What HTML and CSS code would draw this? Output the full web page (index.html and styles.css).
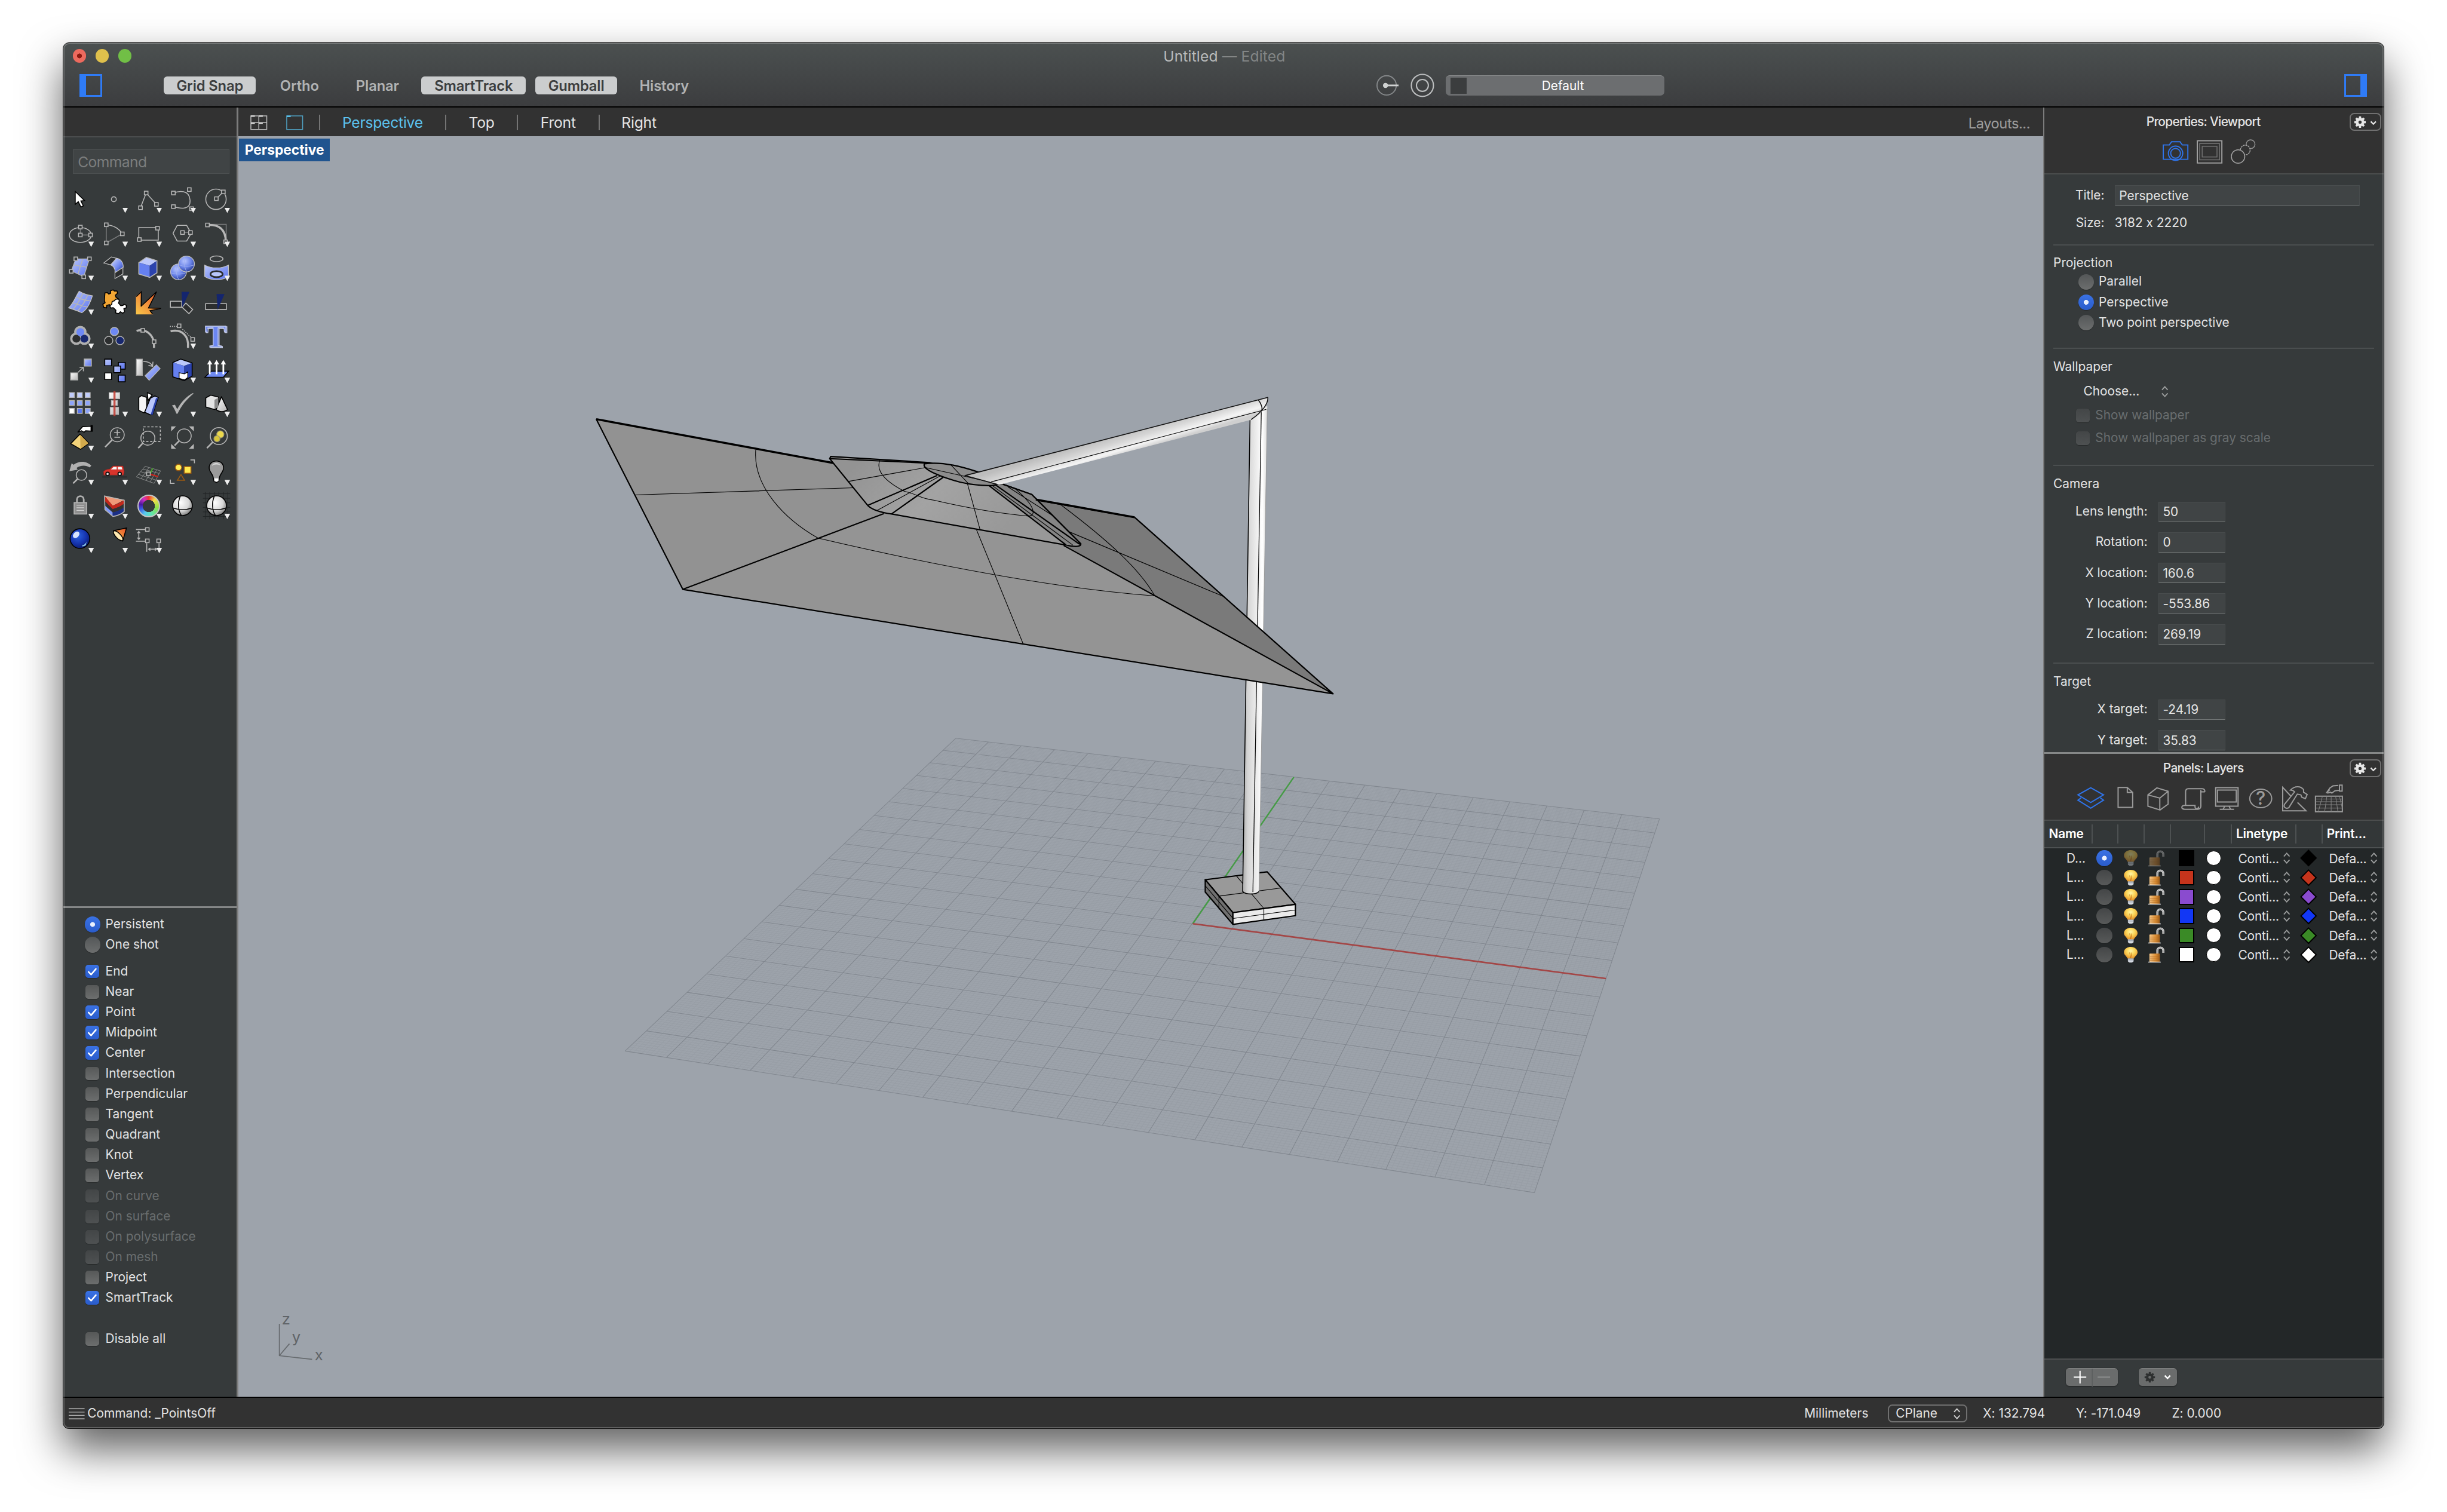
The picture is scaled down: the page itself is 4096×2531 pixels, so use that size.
FILE: index.html
```html
<!DOCTYPE html>
<html lang="en">
<head>
<meta charset="utf-8">
<title>Untitled — Edited</title>
<link rel="stylesheet" href="styles.css">
</head>
<body>
<svg class="defs" aria-hidden="true">
  <defs>
    <linearGradient id="blue" x1="0" y1="0" x2="1" y2="1"><stop offset="0" stop-color="#b9c6fb"/><stop offset="1" stop-color="#5b74ee"/></linearGradient>
    <linearGradient id="blueDeep" x1="0" y1="0" x2="1" y2="1"><stop offset="0" stop-color="#dbe2ff"/><stop offset=".6" stop-color="#6d85ef"/><stop offset="1" stop-color="#1b2f86"/></linearGradient>
    <linearGradient id="grey" x1="0" y1="0" x2="1" y2="1"><stop offset="0" stop-color="#fff"/><stop offset="1" stop-color="#b4b4b4"/></linearGradient>
    <linearGradient id="orange" x1="0" y1="1" x2="1" y2="0"><stop offset="0" stop-color="#f9c84a"/><stop offset="1" stop-color="#e8502a"/></linearGradient>
    <radialGradient id="ball" cx=".38" cy=".32" r=".75"><stop offset="0" stop-color="#b7c5ff"/><stop offset=".55" stop-color="#6a83e8"/><stop offset="1" stop-color="#1f338c"/></radialGradient>
    <radialGradient id="wball" cx=".4" cy=".35" r=".7"><stop offset="0" stop-color="#fff"/><stop offset=".6" stop-color="#d8d8d8"/><stop offset="1" stop-color="#777"/></radialGradient>
    <radialGradient id="deep" cx=".4" cy=".35" r=".7"><stop offset="0" stop-color="#2c62e0"/><stop offset=".6" stop-color="#1533ad"/><stop offset="1" stop-color="#0a1a66"/></radialGradient>
    <radialGradient id="glow" cx=".5" cy=".35" r=".6"><stop offset="0" stop-color="#fff6a8"/><stop offset=".5" stop-color="#fbd65a"/><stop offset="1" stop-color="#ea9c30"/></radialGradient>
    <linearGradient id="brass" x1="0" y1="0" x2="1" y2="0"><stop offset="0" stop-color="#f7c98a"/><stop offset=".6" stop-color="#dd8f35"/><stop offset="1" stop-color="#9a5a18"/></linearGradient>
    <g id="n"><rect x="-9.5" y="-9.5" width="19" height="19" fill="#363a3b" stroke="#b6b6b6" stroke-width="5"/></g>
    <symbol id="updown" viewBox="0 0 12 20"><path d="M1 7 6 1.5 11 7M1 13l5 5.5 5-5.5" fill="none" stroke="currentColor" stroke-width="2"/></symbol>
    <symbol id="gear" viewBox="0 0 24 24"><g fill="currentColor"><path fill-rule="evenodd" d="M12 4a8 8 0 1 0 0 16 8 8 0 0 0 0-16zm0 5a3 3 0 1 1 0 6 3 3 0 0 1 0-6z"/><path d="M10 1h4l.6 5H9.400zM10 23h4l.6-5H9.400zM1 10v4l5 .6V9.400zM23 10v4l-5 .6V9.400z"/><path d="m2.900 5.700 2.800-2.800 4 3.100L6 9.700zM21.100 5.700l-2.800-2.800-4 3.100L18 9.700zM2.900 18.300l2.800 2.800 4-3.100L6 14.300zM21.100 18.300l-2.800 2.800-4-3.100 3.700-3.700z"/></g></symbol>
    <symbol id="down" viewBox="0 0 12 8"><path d="m1.500 1.500 4.500 4.500 4.500-4.500" fill="none" stroke="currentColor" stroke-width="2.400"/></symbol>
    <symbol id="bulb" viewBox="0 0 24 28"><path d="M12 0C5 0 0 4.500 0 9.500c0 4.500 4.500 7 6.500 11h11c2-4 6.500-6.500 6.500-11C24 4.500 19 0 12 0z" fill="url(#glow)"/><path d="M10 10l2 10 2-10" fill="none" stroke="#c9701c" stroke-width="1"/><path d="M7 20.500h10v5L14 28h-4l-3-2.500z" fill="#d5dae2"/><path d="M7 23h10" stroke="#7d8694"/></symbol>
    <symbol id="lock" viewBox="0 0 29 29"><path d="M16 14V7.500a5.200 5.200 0 0 1 10.500 0v4" fill="none" stroke="#d9d9d9" stroke-width="3.600"/><path d="M16 14V7.500a5.200 5.200 0 0 1 10.500 0v4" fill="none" stroke="#8f8f8f" stroke-width="1"/><rect x="2" y="13" width="18.500" height="14.500" rx="1" fill="url(#brass)"/><path d="M3 17.500h17M3 21h17M3 24.500h17" stroke="#a8641f" stroke-width=".8"/><path d="M0 28h22" stroke="#ddd" stroke-width="2"/></symbol>
    <symbol id="check" viewBox="0 0 24 24"><path d="m5.500 12.500 4.500 4.700 8.500-10" fill="none" stroke="#fff" stroke-width="2.600" stroke-linecap="round" stroke-linejoin="round"/></symbol>
    <linearGradient id="pole" x1="0" x2="1" y1="0" y2="0"><stop offset="0" stop-color="#a9a9a9"/><stop offset=".2" stop-color="#d4d4d4"/><stop offset=".6" stop-color="#f0f0f0"/><stop offset=".8" stop-color="#fff"/><stop offset="1" stop-color="#ddd"/></linearGradient>
    <linearGradient id="arm" gradientUnits="userSpaceOnUse" x1="1080" y1="280" x2="1130" y2="350"><stop offset="0" stop-color="#bdbdbd"/><stop offset=".4" stop-color="#d6d6d6"/><stop offset=".75" stop-color="#f4f4f4"/><stop offset="1" stop-color="#cfcfcf"/></linearGradient>
    <linearGradient id="cap" gradientUnits="userSpaceOnUse" x1="540" y1="480" x2="900" y2="640"><stop offset="0" stop-color="#939393"/><stop offset=".5" stop-color="#a3a3a3"/><stop offset="1" stop-color="#989898"/></linearGradient>
  </defs>
</svg>

<div class="window">
  <header class="titlebar">
    <div class="title-row">
      <div class="lights"><i class="light close"></i><i class="light min"></i><i class="light max"></i></div>
      <div class="doc-title">Untitled <span>— Edited</span></div>
    </div>
    <div class="tool-row">
      <i class="side-toggle at-start"></i>
      <nav class="toggles">
        <span class="toggle on w-snap">Grid Snap</span>
        <span class="toggle w-ortho">Ortho</span>
        <span class="toggle w-planar">Planar</span>
        <span class="toggle on w-smart">SmartTrack</span>
        <span class="toggle on w-gum">Gumball</span>
        <span class="toggle w-hist">History</span>
      </nav>
      <svg class="ic-rec" viewBox="0 0 40 42"><circle cx="18" cy="21" r="17" fill="none" stroke="#85888a" stroke-width="2"/><circle cx="16" cy="21" r="4.500" fill="#d0d2d2"/><path d="M16 21h23" stroke="#d0d2d2" stroke-width="3"/></svg>
      <svg class="ic-target" viewBox="0 0 42 42"><g fill="none" stroke="#bcbebf" stroke-width="2.200"><circle cx="21" cy="21" r="19.500"/><circle cx="21" cy="21" r="10.500"/></g></svg>
      <div class="layer-pop"><i></i><span>Default</span></div>
      <i class="side-toggle at-end"></i>
    </div>
  </header>

  <div class="main">
    <aside class="left">
      <div class="strip"></div>
      <div class="command">Command</div>
      <div class="tools">
        <span class="tool"><svg viewBox="6 6 180 180"><path d="M69 52v68l16-14 14 28 13-6-13-26 19-2z" fill="#fff" stroke="#000" stroke-width="5"/></svg></span>
        <span class="tool more"><svg viewBox="186 6 180 180"><circle cx="273" cy="93" r="13" class="l"/></svg></span>
        <span class="tool more"><svg viewBox="366 6 180 180"><path class="l" d="M414 138 444 60l54 60"/><use href="#n" x="414" y="138"/><use href="#n" x="444" y="60"/><use href="#n" x="498" y="120"/></svg></span>
        <span class="tool more"><svg viewBox="546 6 180 180"><path class="l" d="M588 60c30-12 85-18 88 38s-56 44-88 34"/><use href="#n" x="588" y="60"/><use href="#n" x="588" y="132"/><use href="#n" x="672" y="42"/><use href="#n" x="684" y="143"/></svg></span>
        <span class="tool more"><svg viewBox="726 6 180 180"><circle class="l" cx="813" cy="93" r="54"/><path class="l" d="m815 90 37-36"/><use href="#n" x="815" y="90"/><use href="#n" x="852" y="54"/></svg></span>

        <span class="tool more"><svg viewBox="6 186 180 180"><ellipse class="l" cx="96" cy="282" rx="58" ry="39"/><path class="l d" d="M96 240v42h54"/><use href="#n" x="96" y="240"/><use href="#n" x="96" y="282"/><use href="#n" x="150" y="282"/></svg></span>
        <span class="tool more"><svg viewBox="186 186 180 180"><path class="l d" d="M233 228v96l84-48"/><path class="l" d="M233 228c40 2 70 22 84 48"/><use href="#n" x="233" y="228"/><use href="#n" x="233" y="324"/><use href="#n" x="318" y="276"/></svg></span>
        <span class="tool more"><svg viewBox="366 186 180 180"><path class="l" d="M405 243h103v66H405z"/><use href="#n" x="504" y="246"/><use href="#n" x="408" y="306"/></svg></span>
        <span class="tool more"><svg viewBox="546 186 180 180"><path class="l" d="M608 231h50l24 42-24 41h-50l-22-41z"/><path class="l d" d="M636 269h42"/><use href="#n" x="636" y="269"/><use href="#n" x="678" y="269"/></svg></span>
        <span class="tool more"><svg viewBox="726 186 180 180"><path class="l d" d="M780 226h87v90"/><path class="l wide-arc" d="M770 229c58-2 95 20 95 90"/><use href="#n" x="768" y="229"/><use href="#n" x="864" y="318"/></svg></span>

        <span class="tool more"><svg viewBox="6 366 180 180"><path d="M72 408h72l-30 94-66-30z" fill="url(#blue)" stroke="#b6b6b6" stroke-width="4"/><path class="l" d="M108 410c-10 30-16 50-24 78M60 440c30 4 50 10 70 12"/><use href="#n" x="72" y="408"/><use href="#n" x="144" y="408"/><use href="#n" x="48" y="474"/><use href="#n" x="114" y="503"/></svg></span>
        <span class="tool more"><svg viewBox="186 366 180 180"><path d="m220 430 40-32 30 8-34 34zM279 470l42-16v34l-42 24z" fill="#2c2e2f" stroke="#c4c4c4" stroke-width="4"/><path d="M256 440c16 6 24 18 25 40l42-28c0-26-14-44-36-47z" fill="url(#blueDeep)" stroke="#c4c4c4" stroke-width="4"/></svg></span>
        <span class="tool more"><svg viewBox="366 366 180 180"><path d="m405 428 40-28 56 18-38 26z" fill="#bcc8fb"/><path d="m405 428 58 16v62l-58-18z" fill="#6580f0"/><path d="m501 418-38 26v62l38-24z" fill="#2c43ad"/><path class="l" d="m405 428 40-28 56 18v64l-38 24-58-18z"/></svg></span>
        <span class="tool more"><svg viewBox="546 366 180 180"><g fill="url(#ball)" stroke="#c0c0c0" stroke-width="4"><circle cx="615" cy="477" r="42"/><circle cx="657" cy="435" r="42"/></g><path class="l thin" d="M618 440c24 10 54 10 80 0M650 394c-8 26-6 56 8 82M574 482c24 8 50 10 80 0M608 436c-8 26-6 56 8 82"/></svg></span>
        <span class="tool more"><svg viewBox="726 366 180 180"><ellipse class="l" cx="816" cy="408" rx="34" ry="15"/><path d="M753 441c36 20 90 20 126 0v60c-36 24-90 24-126 0z" fill="url(#blue)" stroke="#c0c0c0" stroke-width="4"/><ellipse cx="816" cy="489" rx="32" ry="16" fill="#b9c6fb" stroke="#2a2c2d" stroke-width="9"/></svg></span>

        <span class="tool more"><svg viewBox="6 546 180 180"><path d="M90 579c22 14 44 20 70 24-10 34-24 70-56 90-26-12-46-18-70-26 28-26 36-58 56-88z" fill="url(#blue)" stroke="#c4c4c4" stroke-width="4"/><path class="l" d="M112 588c-18 34-30 60-54 86M136 597c-16 36-28 60-54 86M72 610c24 10 48 18 74 20M54 640c24 8 48 16 76 22"/></svg></span>
        <span class="tool"><svg viewBox="186 546 180 180"><g stroke="#000" stroke-width="5" stroke-linejoin="round"><path d="m226 588 12-2 8 8 10-4 0-14 14-4 6 6 14 0 3 12-12 10 4 12 10 6-6 10-14 2-8 20-10 8-8-8-14 4 0 14-16-4-4-16 12-8-4-12z" fill="#f2a634"/><path d="m264 634 12-4 6-8 16-2 4 10-4 12 12 14 12-2 4-6 14 6-2 14-12 4 4 16-10 8-12-8-10 10-16-4 2-14-14-14-14 2-4-12 10-8z" fill="#fff"/></g></svg></span>
        <span class="tool"><svg viewBox="366 546 180 180"><path d="M390 606l27-26-2 78 84-76-44 84 66 4-56 14 16 18h-91z" fill="url(#orange)"/><path d="M392 608l26-26v76l81-76-43 86 66 2-58 12 14 18" fill="none" stroke="#000" stroke-width="4.500"/></svg></span>
        <span class="tool"><svg viewBox="546 546 180 180"><path d="M572 632h60v32h-60zM634 664l20-22 36 34-20 22z" fill="#2c2e2f" class="l2"/><path d="M631 582h42l-38 82z" fill="#14256e"/></svg></span>
        <span class="tool"><svg viewBox="726 546 180 180"><path d="M758 645h110v31H758z" fill="#2c2e2f" class="l2"/><path d="M816 594h42l-36 84z" fill="#14256e"/></svg></span>

        <span class="tool more"><svg viewBox="6 726 180 180"><g stroke="#b0b0b0" stroke-width="16"><circle cx="75" cy="830" r="25"/><circle cx="117" cy="830" r="25"/><circle cx="96" cy="795" r="25"/></g><circle cx="75" cy="830" r="21" fill="#2c2e2f"/><circle cx="117" cy="830" r="21" fill="#18286f"/><circle cx="96" cy="795" r="21" fill="#6d88f5"/></svg></span>
        <span class="tool"><svg viewBox="186 726 180 180"><g stroke="#b6b6b6" stroke-width="4.500"><circle cx="246" cy="840" r="22" fill="#2c2e2f"/><circle cx="306" cy="840" r="22" fill="#18286f"/><circle cx="276" cy="792" r="22" fill="#6d88f5"/></g></svg></span>
        <span class="tool"><svg viewBox="366 726 180 180"><path class="l wide-arc" d="M393 789c50-14 98 20 92 90"/><use href="#n" x="426" y="786"/><use href="#n" x="486" y="846"/></svg></span>
        <span class="tool more"><svg viewBox="546 726 180 180"><path class="l wide-arc" d="M573 791c60-14 98 24 92 88"/><path d="M570 765h36M636 780l44 42" class="l" stroke-dasharray="5 6"/><use href="#n" x="618" y="762"/><use href="#n" x="690" y="834"/></svg></span>
        <span class="tool"><svg viewBox="726 726 180 180"><text x="817" y="877" text-anchor="middle" class="glyph-t back">T</text><text x="811" y="873" text-anchor="middle" class="glyph-t">T</text></svg></span>

        <span class="tool more"><svg viewBox="6 -54 180 180"><path d="M45 51h37v37H45z" fill="url(#grey)" stroke="#b6b6b6" stroke-width="5"/><path d="M117-22h37v37h-37z" fill="url(#blue)" stroke="#b6b6b6" stroke-width="5"/><path class="l" d="m84 48 28-27M92 22h20v20"/></svg></span>
        <span class="tool"><svg viewBox="186 -54 180 180"><g stroke="#000" stroke-width="5"><path d="M225-22h36v35h-36zM297-4h36v35h-36z" fill="url(#blue)"/><path d="M273 15h36v35h-36zM297 63h36v35h-36z" fill="url(#blue)"/><path d="M225 51h36v35h-36z" fill="#fff"/></g></svg></span>
        <span class="tool"><svg viewBox="366 -54 180 180"><path d="M392-22h32v86h-32z" fill="url(#grey)" stroke="#a8a8a8" stroke-width="4"/><path d="m438 66 60-58 20 20-58 62z" fill="url(#blue)" stroke="#b6b6b6" stroke-width="4"/><path class="l" d="M428-10c28 0 42 8 48 24M456 12l22 4 2-24"/></svg></span>
        <span class="tool more"><svg viewBox="546 -54 180 180"><path d="m585-4 42-18 60 20-42 16z" fill="#bcc8fb"/><path d="m585-4 60 18v78l-60-20z" fill="#6580f0"/><path d="m687-2-42 16v78l42-26z" fill="#2c43ad"/><path d="m618 50 28 6 18-10v30l-18 12-28-8z" fill="#fff" stroke="#000" stroke-width="4"/><path d="m585-4 42-18 60 20v70l-42 24-60-20z" fill="none" stroke="#000" stroke-width="5"/></svg></span>
        <span class="tool more"><svg viewBox="726 -54 180 180"><path d="m754 74 34-32h92l-28 32z" fill="#6f8af2" stroke="#000" stroke-width="5"/><path d="M780 58V-4M816 58V-4M852 58V-4" stroke="#fff" stroke-width="9"/><path d="m766 6 14-24 14 24zM802 6l14-24 14 24zM838 6l14-24 14 24z" fill="#fff"/></svg></span>

        <span class="tool more"><svg viewBox="6 126 180 180"><g stroke="#b6b6b6" stroke-width="4.500" fill="#8ea4fa"><path d="M38 158h26v26H38zM80 158h26v26H80zM122 158h26v26h-26z" fill="#c0ccfc"/><path d="M38 200h26v26H38zM80 200h26v26H80zM122 200h26v26h-26zM122 242h26v26h-26z"/><path d="M80 242h26v26H80z" fill="#5a76ee"/><path d="M38 242h26v26H38z" fill="#fff"/></g></svg></span>
        <span class="tool more"><svg viewBox="186 126 180 180"><path d="M248 158h56v32h-56zM260 200h32v26h-32zM254 236h44v38h-44z" fill="url(#grey)" stroke="#b6b6b6" stroke-width="4"/><path d="M271 150h11v132h-11z" fill="#c23a30" opacity=".85"/></svg></span>
        <span class="tool more"><svg viewBox="366 126 180 180"><g stroke="#000" stroke-width="5" stroke-linejoin="round"><path d="m405 184 14-10 28 10v60l-14 22-28-14z" fill="#f5f5f5"/><path d="m450 158 26 12-22 30z" fill="#fff"/><path d="m436 262 30-74 24-12 18 8-30 90-12 2z" fill="#b9c6fb"/></g><path d="m506 186-10 2-28 86 10 2z" fill="#2c43ad"/></svg></span>
        <span class="tool more"><svg viewBox="546 126 180 180"><path d="m580 226 16-4 12 24c20-36 46-66 84-86l2 4c-36 30-62 60-84 106l-6 0c-6-16-14-34-24-44z" fill="#b4b4b4"/></svg></span>
        <span class="tool more"><svg viewBox="726 126 180 180"><g stroke="#000" stroke-width="5" stroke-linejoin="round"><path d="m759 186 26-14 42 10v54l-22 12-46-14z" fill="#e4e4e4"/><path d="m842 180 32 68c-16 14-44 14-60 0z" fill="url(#grey)"/></g><path d="m805 196 20-10v48l-20 12z" fill="#8b8b8b"/></svg></span>

        <span class="tool more"><svg viewBox="6 306 180 180"><path d="M82 368l26-30 50-2v26l-34-2-8 8-14-8z" fill="#fff" stroke="#000" stroke-width="5"/><path d="M150 330h12v34h-12z"/><path d="m45 428 49-50 47 48-44 32z" fill="#f3d37a" stroke="#000" stroke-width="5" stroke-linejoin="round"/><path d="m95 380 44 46-42 30z" fill="#d3aa4c"/></svg></span>
        <span class="tool"><svg viewBox="186 306 180 180"><circle class="l" cx="291" cy="381" r="37"/><path class="l" d="M275 370h32M291 354v32M276 394h30"/><path class="l handle" d="m264 408-37 38"/></svg></span>
        <span class="tool"><svg viewBox="366 306 180 180"><path class="l" stroke-dasharray="12 9" d="M429 339h90v78h-90z"/><circle class="l" cx="453" cy="399" r="37"/><path class="l handle" d="m426 426-24 26"/></svg></span>
        <span class="tool"><svg viewBox="546 306 180 180"><path d="M576 337h26l-26 26zM696 337v26l-26-26zM576 455v-26l26 26zM696 455h-26l26-26z" fill="#b6b6b6"/><circle class="l" cx="645" cy="387" r="37"/><path class="l handle" d="m618 414-24 24"/></svg></span>
        <span class="tool"><svg viewBox="726 306 180 180"><circle class="l" cx="828" cy="388" r="45"/><path class="l handle" d="m796 420-31 32"/><g stroke="#a09a70" stroke-width="4"><circle cx="836" cy="379" r="19" fill="#ecd94c"/><circle cx="818" cy="402" r="16" fill="#d8c63a"/></g></svg></span>

        <span class="tool more"><svg viewBox="6 486 180 180"><path d="M38 574l12-42 10 8c34-26 72-18 94 4l-8 10c-22-14-48-12-70 2l6 10z" fill="#b0b0b0"/><circle class="l" cx="102" cy="594" r="28"/><path class="l handle" d="m82 614-24 24"/></svg></span>
        <span class="tool more"><svg viewBox="186 486 180 180"><path d="M212 604h130" stroke="#26292a" stroke-width="5"/><path d="M218 576c10-12 24-12 34-14l16-16h54l6 30-4 18H220z" fill="#d8342c" stroke="#8d1d18" stroke-width="2"/><path d="M258 564l14-13h16v13zM294 551h20l4 13h-24z" fill="#f4f4f4"/><g fill="#ddd" stroke="#111" stroke-width="6"><circle cx="240" cy="588" r="9"/><circle cx="304" cy="588" r="9"/></g></svg></span>
        <span class="tool more"><svg viewBox="366 486 180 180"><path d="M438 548l82 24-34 66-94-34zM459 554l-42 59M480 560l-38 63M500 566l-36 67M426 562l88 24M414 576l92 28M402 590l92 30" fill="none" stroke="#8d8f8f" stroke-width="3"/><path d="m466 586 12-28" stroke="#4aa02c" stroke-width="7"/><path d="m466 590 42 12" stroke="#cc2016" stroke-width="7"/><use href="#n" x="456" y="588"/></svg></span>
        <span class="tool more"><svg viewBox="546 486 180 180"><g stroke="#9a5a12" stroke-width="5"><circle cx="615" cy="554" r="17" fill="#ffee58"/><path d="M645 549h36v36h-36z" fill="#ffe94e"/><path d="m628 592 19 30h-38z" fill="none"/></g><path class="l" d="M678 514h21v18M572 618v20h22"/></svg></span>
        <span class="tool more"><svg viewBox="726 486 180 180"><path d="M815 520c-24 0-38 16-38 36 0 22 20 32 22 54l4 18 12 5 12-5 4-18c2-22 22-32 22-54 0-20-14-36-38-36z" fill="#9b9b9b" stroke="#000" stroke-width="5"/><path d="M792 546c2-20 40-22 46 0-8-10-36-10-46 0z" fill="#d5d5d5"/><path d="M804 612h22v14l-11 4-11-4z" fill="#fff"/></svg></span>

        <span class="tool more"><svg viewBox="6 666 180 180"><path d="M78 738v-14c0-24 36-24 36 0v14" fill="none" stroke="#b0b0b0" stroke-width="9"/><path d="M63 740h67v60H63z" fill="#8f8f8f" stroke="#b6b6b6" stroke-width="5"/><path d="M76 753h40M76 767h40M76 781h40" stroke="#d0d0d0" stroke-width="4"/></svg></span>
        <span class="tool more"><svg viewBox="186 666 180 180"><path d="m224 705 105 20-62 32z" fill="#f09a78"/><path d="m224 705 43 50c20-6 42-16 61-30v20c-18 14-40 24-61 30l-41-42z" fill="#c2281c"/><path d="m226 732 41 42c20-6 44-14 61-28v18c-18 14-40 24-61 28l-41-36z" fill="#333"/><path d="m226 756 41 36v20l-40-36z" fill="#7f98f8"/><path d="M267 792c20-4 44-14 61-28v22c-18 14-40 24-61 26z" fill="#1b2f86"/><path class="l" d="m224 705 104 22v60c-16 14-36 22-60 26l-42-36z"/></svg></span>
        <span class="tool more"><i class="wheel"></i></span>
        <span class="tool"><svg viewBox="546 666 180 180"><circle cx="636" cy="756" r="52" fill="url(#wball)" stroke="#000" stroke-width="5"/><path d="M585 768c34 12 70 12 102 0M624 706c-14 34-12 74 6 102" fill="none" stroke="#000" stroke-width="5"/></svg></span>
        <span class="tool more"><svg viewBox="726 666 180 180"><path d="M744 693h144M744 717h144M744 741h144M744 765h144M744 789h144M744 813h144M756 684v144M780 684v144M804 684v144M828 684v144M852 684v144M876 684v144" stroke="#212425" stroke-width="3"/><circle cx="816" cy="756" r="52" fill="url(#wball)" stroke="#000" stroke-width="5"/><path d="M765 768c34 12 70 12 102 0M804 706c-14 34-12 74 6 102" fill="none" stroke="#000" stroke-width="5"/></svg></span>

        <span class="tool more"><svg viewBox="6 846 180 180"><circle cx="94" cy="930" r="52" fill="url(#deep)" stroke="#000" stroke-width="5"/><ellipse cx="74" cy="910" rx="20" ry="14" transform="rotate(-45 74 910)" fill="#d8e4ff"/><path d="M104 968c14-4 22-12 26-24l-6 22-16 6z" fill="#9fe0f4"/></svg></span>
        <span class="tool more"><svg viewBox="186 846 180 180"><path d="m272 888 68-14-20 68z" fill="url(#orange)" stroke="#000" stroke-width="5"/><ellipse cx="296" cy="915" rx="34" ry="13" transform="rotate(46 296 915)" fill="#ffe9b0" stroke="#000" stroke-width="5"/></svg></span>
        <span class="tool more"><svg viewBox="366 846 180 180"><path class="l" d="M390 882h50M390 944h50M405 894v38M398 901l7-9 7 9M398 925l7 9 7-9M447 954v46M512 954v30M458 986h40M466 979l-9 7 9 7M490 979l9 7-9 7"/><use href="#n" x="450" y="882"/><use href="#n" x="450" y="942"/><use href="#n" x="510" y="942"/></svg></span>
      </div>
      <div class="osnap">
        <div class="opt"><i class="radio on"></i>Persistent</div>
        <div class="opt"><i class="radio"></i>One shot</div>
        <div class="opt first"><svg class="box on"><use href="#check"/></svg>End</div>
        <div class="opt"><i class="box"></i>Near</div>
        <div class="opt"><svg class="box on"><use href="#check"/></svg>Point</div>
        <div class="opt"><svg class="box on"><use href="#check"/></svg>Midpoint</div>
        <div class="opt"><svg class="box on"><use href="#check"/></svg>Center</div>
        <div class="opt"><i class="box"></i>Intersection</div>
        <div class="opt"><i class="box"></i>Perpendicular</div>
        <div class="opt"><i class="box"></i>Tangent</div>
        <div class="opt"><i class="box"></i>Quadrant</div>
        <div class="opt"><i class="box"></i>Knot</div>
        <div class="opt"><i class="box"></i>Vertex</div>
        <div class="opt off"><i class="box"></i>On curve</div>
        <div class="opt off"><i class="box"></i>On surface</div>
        <div class="opt off"><i class="box"></i>On polysurface</div>
        <div class="opt off"><i class="box"></i>On mesh</div>
        <div class="opt"><i class="box"></i>Project</div>
        <div class="opt"><svg class="box on"><use href="#check"/></svg>SmartTrack</div>
        <div class="opt last"><i class="box"></i>Disable all</div>
      </div>
    </aside>

    <section class="center">
      <div class="tabs">
        <svg class="ic-four" viewBox="0 0 30 26"><path d="M1 1h28v24H1zM15 1v24M1 13h28" fill="none" stroke="#b9b9b9" stroke-width="1.600"/><path d="M1 1.500h7M15 1.500h7M1 14h7M15 14h7" stroke="#ddd" stroke-width="2.400"/></svg>
        <svg class="ic-one" viewBox="0 0 30 26"><path d="M1 1h28v24H1z" fill="none" stroke="#4f9fc0" stroke-width="1.600"/><path d="M1 1.800h7" stroke="#5ac8f5" stroke-width="2.400"/></svg>
        <span class="tab t-persp">Perspective</span>
        <span class="tab t-top">Top</span>
        <span class="tab t-front">Front</span>
        <span class="tab t-right">Right</span>
        <span class="layouts">Layouts...</span>
      </div>
      <div class="viewport">
        <svg class="scene" viewBox="420 241 3182 2221" preserveAspectRatio="none">
          <g id="grid"></g>
          <path d="M2102.700 1628.800 2280.800 1370.500" stroke="#459b45" stroke-width="2.600"/>
          <path d="M2102.700 1628.800 2831 1725.400" stroke="#a34646" stroke-width="2.800"/>

          <g class="model" transform="translate(2050 1300) scale(.574 .3333)">
            <path class="e" d="m130 754 190-42 87 172-192 44z" fill="#999"/>
            <path class="e" d="m130 754 85 174v62l-85-171z" fill="#707070"/>
            <path class="e" d="m215 928 192-44v60l-192 46z" fill="#ebebeb"/>
            <path class="t" d="m174 840 188-42M226 734l84 172v58M215 959l192-45M130 786l85 172M172 841v60" fill="none"/>
          </g>
          <path d="M2203.600 735 2234 716 2219.300 1572c-4 5-24 5-28.700 0z" fill="url(#pole)"/>
          <path d="M2203.600 738 2190.600 1572c5 6 24 6 28.700 0" fill="none" stroke="#000" stroke-width="1.600"/>
          <path d="M2223.500 722 2208.600 1573" stroke="#000" stroke-width="1.300"/>
          <path d="M2234 722 2219.300 1572" stroke="#999" stroke-width="1"/>

          <g class="model" transform="translate(1000 660) scale(.89286 .38265)">
            <path d="M57 208 525 410 640 645 228 992z" fill="#929292"/>
            <path d="M228 992 625 643 980 788 1512 1473z" fill="#949494"/>
            <path d="M925 578 1120 660 1512 1473 980 790z" fill="#7a7a7a"/>
            <path class="h" d="M57 208 525 410M925 578 1120 660" fill="none"/>
            <path class="e" d="M57 208 228 992 1512 1473 1120 660M228 992 625 643M980 790 1512 1473" fill="none"/>
            <path class="t" fill="none" d="M372 348C366 520 430 670 495 756 700 868 950 985 1160 1022 1130 900 1070 770 974 602M133 557 565 524M808 718 900 1243M990 726 1295 1024"/>
            <path class="e" d="M520 380 715 408 860 508 917 555 1014 783C1014 797 1000 797 985 788L640 645C612 635 600 622 593 605L518 390z" fill="url(#cap)"/>
            <path d="M860 508 917 555 1014 783 985 788 833 515z" fill="#858585"/>
            <path class="e" fill="none" d="M518 390 715 411M730 468 593 605M742 476 640 645M833 515 985 788M845 510 1012 785M860 508 917 555 1014 783M925 580 1120 660"/>
            <path class="t" fill="none" d="M617 397C608 450 632 500 665 540 700 560 690 570 725 582 780 612 850 642 912 655 925 650 925 610 885 530M555 495 705 432M736 470 612 628M790 505 815 718M838 512 998 788M870 520 960 655"/>
            <path class="e" fill="#8d8d8d" d="M705 414C745 400 790 436 812 452L850 508C838 520 800 512 775 498 745 480 698 440 705 414z"/>
            <path class="t" fill="none" d="M757 418 792 505M705 430 845 503"/>
            <path d="M1383 108 810 452 785 468C805 478 825 492 848 508L858 507 1352 210C1375 180 1386 130 1383 108z" fill="url(#arm)"/>
            <path class="m" fill="none" d="M1383 108 785 468 848 508M1383 106C1385 135 1372 175 1350 210M1364 118C1370 135 1374 160 1370 172"/>
            <path class="t" fill="none" d="M1380 163 837 497"/>
          </g>

          <path d="M492.300 2334v56l57.700 6.500M492.300 2390l17.700-21" fill="none" stroke="#666a6e" stroke-width="1.800"/>
          <g class="axis"><text x="504" y="2335" text-anchor="middle">z</text><text x="522" y="2367" text-anchor="middle">y</text><text x="562" y="2398" text-anchor="middle">x</text></g>
        </svg>
        <span class="view-label">Perspective</span>
      </div>
    </section>

    <aside class="right">
      <section class="props">
        <div class="panel-head">
          <div class="head-title"><h2>Properties: Viewport</h2><span class="gear-btn"><svg class="g"><use href="#gear"/></svg><svg class="c"><use href="#down"/></svg></span></div>
          <div class="head-icons">
            <svg class="ic-tabs" viewBox="566 156 412 116"><g fill="none" stroke="#2f74ea" stroke-width="5"><path d="M574 186h26l10-14h36l10 14h24v62H574z"/><circle cx="627" cy="222" r="31"/><circle cx="627" cy="222" r="21"/></g><g fill="none" stroke="#a2a2a2" stroke-width="4"><path d="M721 168h106v96H721z" stroke-width="5"/><path d="M731 180h86v70h-86zM742 192h64v46h-64z" stroke="#6f6f6f"/><circle cx="951" cy="183" r="19" stroke="#909090"/><circle cx="928" cy="208" r="21" fill="#323232" stroke-dasharray="8 3"/><circle cx="897" cy="236" r="29" fill="#323232"/></g></svg>
          </div>
        </div>
        <div class="field"><label>Title:</label><span class="input wide">Perspective</span></div>
        <div class="field size"><label>Size:</label><span>3182 x 2220</span></div>
        <hr class="r1">
        <h3>Projection</h3>
        <div class="opt p"><i class="radio"></i>Parallel</div>
        <div class="opt p"><i class="radio on"></i>Perspective</div>
        <div class="opt p"><i class="radio"></i>Two point perspective</div>
        <hr class="r2">
        <h3>Wallpaper</h3>
        <div class="choose"><span>Choose...</span><svg class="ud"><use href="#updown"/></svg></div>
        <div class="opt w off"><i class="box"></i>Show wallpaper</div>
        <div class="opt w off"><i class="box"></i>Show wallpaper as gray scale</div>
        <hr class="r3">
        <h3>Camera</h3>
        <div class="nums">
          <div class="field num"><label>Lens length:</label><span class="input">50</span></div>
          <div class="field num"><label>Rotation:</label><span class="input">0</span></div>
          <div class="field num"><label>X location:</label><span class="input">160.6</span></div>
          <div class="field num"><label>Y location:</label><span class="input">-553.86</span></div>
          <div class="field num"><label>Z location:</label><span class="input">269.19</span></div>
        </div>
        <hr class="r4">
        <h3>Target</h3>
        <div class="nums">
          <div class="field num"><label>X target:</label><span class="input">-24.19</span></div>
          <div class="field num"><label>Y target:</label><span class="input">35.83</span></div>
        </div>
      </section>

      <section class="layers">
        <div class="panel-head">
          <div class="head-title"><h2>Panels: Layers</h2><span class="gear-btn"><svg class="g"><use href="#gear"/></svg><svg class="c"><use href="#down"/></svg></span></div>
          <svg class="ic-panels" viewBox="180 30 1200 160" preserveAspectRatio="none">
            <g class="pi blue"><path d="m243 54 57 38-57 40-57-40zM200 108l-14 12 57 42 57-42-14-12"/></g>
            <g class="pi">
              <path d="M365 53h41l24 26v79h-65zM406 53v26h24"/>
              <path d="m498 92 40-37 50 18v68l-36 31-54-20zM498 92l53 17 37-36M551 109v62"/>
              <path d="M752 76c0-10-4-17-12-17h-62c-8 0-12 6-12 16v74M752 76h-18v-10M734 68v84c0 10-6 16-14 16h-58c-18 0-16-20 0-20h46v8c0 12 16 12 16-2"/>
              <path d="M800 54h100v98H800zM808 66h84v64h-84zM840 153l-6 14M860 153l6 14M818 168h64"/>
              <circle cx="1001" cy="111" r="49"/>
              <path d="M1135 98 1099 52v124h104l-38-44M1108 140l44-64c-4-6-12-10-18-10 20-24 46-20 58-2l0 14 16 12-8 22-16-8-4-12-16-4-38 72c-14 8-26-4-18-20z"/>
              <path d="M1245 99h120v82h-120z"/>
              <path class="fine" d="M1245 114h120M1245 128h120M1245 144h120M1245 162h120M1276 99l-18 82M1296 99l-10 82M1315 99v82M1335 99l10 82M1352 99l12 60"/>
              <path d="m1295 80 14-24 14-12 24-2M1352 40h12v32h-12zM1350 68l-18 2-14 12-6-4-12 4-5-2 14-16"/>
            </g>
            <text class="q" transform="translate(1001 145) scale(1 1.186)" text-anchor="middle">?</text>
          </svg>
        </div>
        <div class="row thead"><b class="name">Name</b><i></i><i></i><i></i><i></i><i></i><b class="lt">Linetype</b><i></i><b class="pr">Print...</b></div>
        <div class="tbody" id="layers"></div>
        <div class="foot">
          <span class="pm"><svg viewBox="0 0 92 32"><path d="M46.500 0v32" stroke="#5a5d5d" stroke-width="1.500"/><path d="M14 15h22M25 4v22" stroke="#fff" stroke-width="2.200"/><path d="M56 15h22" stroke="#8b8d8d" stroke-width="2.200"/></svg></span>
          <span class="act"><svg class="g"><use href="#gear"/></svg><svg class="c"><use href="#down"/></svg></span>
        </div>
      </section>
    </aside>
  </div>

  <footer class="status">
    <svg class="burger" viewBox="0 0 28 20"><path d="M0 1h28M0 7h28M0 13h28M0 19h28" stroke="#a9a9a9" stroke-width="1.600"/></svg>
    <span class="prompt">Command: _PointsOff</span>
    <span class="units">Millimeters</span>
    <span class="cplane">CPlane<svg class="ud"><use href="#updown"/></svg></span>
    <span class="cx">X: 132.794</span>
    <span class="cy">Y: -171.049</span>
    <span class="cz">Z: 0.000</span>
  </footer>
</div>
<script src="app.js"></script>
</body>
</html>
```
FILE: styles.css
```css
/* 1rem is ten design pixels */
html { font-size: 9.4945px; }
* { box-sizing: border-box; margin: 0; padding: 0; }
body { background: #fff; overflow: hidden; width: 4096px; height: 2531px; font-family: Inter, "Liberation Sans", sans-serif; font-size: 2.2rem; font-feature-settings: "calt" 0; line-height: 1; color: #e4e4e4; white-space: nowrap; }
i { font-style: normal; display: block; }
svg { display: block; overflow: visible; }
.defs { position: absolute; width: 0; height: 0; }

.window { position: relative; margin: 7.5rem 0 0 11.1rem; width: 409.2rem; height: 244.4rem; border: .11rem solid #000; border-radius: 1.1rem; display: flex; flex-direction: column; background: #323232; box-shadow: 0 3.6rem 7.4rem rgba(0,0,0,.62); }
.window::after { content: ""; position: absolute; inset: 0; border: .22rem solid rgba(255,255,255,.22); border-radius: 1rem; pointer-events: none; }

.titlebar { height: 11.4rem; border-bottom: .22rem solid #000; background: linear-gradient(#4b5050, #3c3d3f); border-radius: 1rem 1rem 0 0; }
.title-row { height: 4.5rem; display: grid; grid-template-columns: 1fr auto 1fr; align-items: center; }
.lights { display: flex; gap: 1.6rem; padding-left: 1.6rem; }
.light { width: 2.4rem; height: 2.4rem; border-radius: 50%; }
.close { background: radial-gradient(circle, #8c1a10 0 .4rem, #ed6a5e .45rem); }
.min { background: #dfc04c; }
.max { background: #71bf46; }
.doc-title { font-size: 2.6rem; letter-spacing: .005em; color: #b9bbbb; padding: .1rem 0 0 .3rem; }
.doc-title span { color: #838686; }
.tool-row { height: 5.9rem; display: flex; align-items: center; }
.side-toggle { flex: none; width: 4rem; height: 4rem; border: .33rem solid #2f7bf6; }
.at-start { margin-left: 2.8rem; border-left-width: 1.2rem; }
.at-end { margin: 0 2.9rem 0 auto; border-right-width: 1.2rem; }
.toggles { display: flex; gap: 1.7rem; margin-left: 10.9rem; }
.toggle { height: 3.1rem; padding-top: .15rem; display: flex; align-items: center; justify-content: center; border-radius: .6rem; font-size: 2.5rem; font-weight: 600; color: #b0b2b3; letter-spacing: -.005em; }
.toggle.on { background: #cbcdce; color: #3c3e3f; }
.w-snap { width: 16.2rem; } .w-ortho { width: 12rem; } .w-planar { width: 12.1rem; } .w-smart { width: 18.4rem; } .w-gum { width: 14.4rem; } .w-hist { width: 13.2rem; }
.ic-rec { width: 4rem; height: 4.2rem; margin-left: 119rem; }
.ic-target { width: 4.2rem; height: 4.2rem; margin: 0 1.95rem 0 2rem; }
.layer-pop { width: 38.6rem; height: 3.6rem; border-radius: .7rem; background: #6c6e70; border-top: .15rem solid #8a8c8d; display: flex; align-items: center; padding: 0 .9rem; color: #fff; }
.layer-pop i { width: 2.8rem; height: 2.8rem; background: #3b3d3e; }
.layer-pop span { flex: 1; text-align: center; padding-top: .2rem; }

.main { height: 227.2rem; display: flex; }
.left { width: 30.8rem; border-right: .32rem solid #7c7c7c; background: #363a3b; display: flex; flex-direction: column; }
.strip { height: 5.2rem; background: #323232; border-bottom: .22rem solid #4a4c4d; }
.command { margin: 2.1rem 1.2rem 1.6rem 1.6rem; height: 4.3rem; padding: .3rem 0 0 .8rem; display: flex; align-items: center; background: #404445; border: .11rem solid #4c5051; color: #7b7d7d; font-size: 2.6rem; letter-spacing: -.025em; }
.tools { display: grid; grid-template-columns: repeat(5, 6rem); grid-auto-rows: 6rem; }
.tool { position: relative; display: block; }
.tool svg { width: 6rem; height: 6rem; }
.more::after { content: ""; position: absolute; left: 4.37rem; top: 4.4rem; width: 1rem; height: .95rem; background: #eee; clip-path: polygon(0 0, 100% 0, 50% 100%); }
.l { fill: none; stroke: #b6b6b6; stroke-width: 5; }
.l.d { stroke: #77797a; }
.l.thin { stroke-width: 3; stroke: #9fb0f0; }
.l.wide-arc { stroke-width: 11; }
.l.handle { stroke-width: 8; }
.l2 { stroke: #b6b6b6; stroke-width: 5; }
.glyph-t { font: bold 170px "Liberation Serif", serif; fill: #6b86f2; stroke: #c6cdea; stroke-width: 4; }
.glyph-t.back { fill: #1f3390; }
.wheel { position: absolute; left: 1rem; top: 1rem; width: 4rem; height: 4rem; border-radius: 50%; border: .22rem solid #c4c4c4; background: radial-gradient(circle, #363a3b 0 1.05rem, transparent 1.1rem), conic-gradient(#e33, #f6e04a 12%, #8ee04a 28%, #5fe6b0 45%, #58c8f0 58%, #3a52e0 70%, #4a18a0 78%, #d030c8 90%, #e33); }

.osnap { margin-top: auto; height: 86.4rem; border-top: .32rem solid #858787; padding: 1.05rem 0 0 3.7rem; }
.opt { height: 3.6rem; display: flex; align-items: center; }
.radio { width: 2.8rem; height: 2.8rem; border-radius: 50%; background: linear-gradient(#545758, #6c6e6e); margin-right: .9rem; box-shadow: 0 .1rem .1rem rgba(0,0,0,.3); }
.radio.on { background: radial-gradient(circle, #eaf0fd 0 .4rem, transparent .45rem), linear-gradient(#3a72e4, #2a5ccb); }
.box { width: 2.4rem; height: 2.4rem; border-radius: .5rem; background: linear-gradient(#565858, #6c6e6e); margin: 0 1.1rem 0 .2rem; box-shadow: 0 .1rem .1rem rgba(0,0,0,.3); }
.box.on { background: linear-gradient(#3a72e4, #2a5ccb); }
.opt.off { color: #696d6e; }
.off .box { background: linear-gradient(#434647, #4e5152); }
.opt.first { margin-top: 1.1rem; }
.opt.last { margin-top: 3.6rem; }

.center { width: 318.2rem; display: flex; flex-direction: column; }
.tabs { height: 5rem; display: flex; align-items: center; padding-top: .2rem; font-size: 2.6rem; }
.ic-four { width: 3rem; height: 2.6rem; margin-left: 2.1rem; }
.ic-one { width: 3rem; height: 2.6rem; margin: 0 2.7rem 0 3.4rem; }
.tab { height: 2.8rem; border-left: .22rem solid #747474; display: flex; align-items: center; justify-content: center; letter-spacing: -.01em; }
.t-persp { width: 22.3rem; color: #5cc2ee; } .t-top { width: 12.6rem; } .t-front { width: 14.4rem; } .t-right { width: 14.1rem; }
.layouts { margin: .4rem 2.3rem 0 auto; color: #9c9c9c; font-size: 2.5rem; letter-spacing: -.02em; }
.viewport { position: relative; height: 222.2rem; background: #9da3ab; }
.scene { width: 318.2rem; height: 222.2rem; }
.model path { stroke: none; vector-effect: non-scaling-stroke; stroke-linejoin: round; }
.model .e { stroke: #000; stroke-width: 2.2px; }
.model .h { stroke: #000; stroke-width: 3.4px; }
.model .m { stroke: #111; stroke-width: 1.6px; }
.model .t { stroke: #000; stroke-width: 1.1px; }
.maj { stroke: #80868e; stroke-width: 1.1; }
.mnr { stroke: #8d939a; stroke-width: .7; opacity: .42; }
.axis text { font: 27px Inter, sans-serif; fill: #606468; }
.view-label { position: absolute; left: .15rem; top: .4rem; width: 16rem; height: 4rem; padding-top: .15rem; background: #20548f; color: #fff; font-weight: 700; font-size: 2.4rem; display: flex; align-items: center; justify-content: center; }

.right { width: 60rem; border-left: .22rem solid #7c7c7c; background: #363a3b; display: flex; flex-direction: column; }
.props { height: 113.6rem; overflow: hidden; }
.panel-head { height: 11.8rem; background: #323232; border-bottom: .22rem solid #4b4d4d; }
.head-title { height: 5rem; display: flex; align-items: center; padding: 0 .4rem 0 2.3rem; }
h2 { flex: 1; text-align: center; font-size: 2.2rem; font-weight: 500; letter-spacing: -.035em; }
.gear-btn { width: 5.6rem; height: 3.2rem; border: .22rem solid #707070; border-radius: .8rem; display: flex; align-items: center; justify-content: center; gap: .6rem; color: #e6e6e6; }
.gear-btn .g { width: 2.2rem; height: 2.2rem; }
.gear-btn .c { width: 1.2rem; height: .8rem; margin-top: .3rem; }
.ic-tabs { width: 16.82rem; height: 4.735rem; margin: .35rem 0 0 20.7rem; }
.field { height: 3.6rem; display: flex; align-items: center; gap: 1.8rem; margin-top: 1.85rem; }
.field.size { margin-top: 1.3rem; }
label { width: 10.6rem; text-align: right; }
.input { height: 3.6rem; width: 11.8rem; padding: .2rem 0 0 .7rem; display: flex; align-items: center; background: #404445; border: .11rem solid #484c4d; border-bottom: .15rem solid #747878; }
.input.wide { width: 43.2rem; }
.nums { display: flex; flex-direction: column; gap: 1.8rem; margin-top: 1.65rem; }
.field.num { margin: 0; gap: 1.9rem; }
.num label { width: 18.2rem; }
hr { border: 0; height: .2rem; background: #4a4e4f; margin: 0 1.6rem 1.55rem; }
.r1 { margin-top: 1.9rem; } .r2 { margin-top: 2.6rem; } .r3 { margin-top: 2.7rem; } .r4 { margin-top: 3.2rem; }
h3 { height: 3.1rem; line-height: 3.1rem; padding-left: 1.6rem; font-size: 2.2rem; font-weight: 400; }
.opt.p { padding-left: 6rem; }
.opt.p .radio { margin-right: .8rem; }
.choose { height: 3.6rem; margin-top: 1.1rem; margin-bottom: .4rem; padding-left: 6.9rem; display: flex; align-items: center; }
.choose span { width: 13.8rem; }
.ud { width: 1.2rem; height: 2rem; color: #9c9e9e; }
.opt.w { height: 4rem; padding-left: 5.4rem; }
.opt.w .box { margin-right: 1rem; }

.layers { flex: 1; border-top: .32rem solid #858787; display: flex; flex-direction: column; }
.layers .head-title { padding-top: .1rem; }
.ic-panels { width: 47.45rem; height: 5.33rem; margin: .15rem 0 0 5.75rem; }
.pi path, .pi circle { fill: none; stroke: #9b9b9b; stroke-width: 2px; vector-effect: non-scaling-stroke; }
.pi.blue path { stroke: #2f74ea; }
.pi path.fine { stroke-width: 1px; stroke: #858585; }
.q { font: 500 82px Inter, sans-serif; fill: #9b9b9b; }
.row { display: grid; grid-template-columns: 8.3rem 4.6rem 4.6rem 4.6rem 6rem 4.8rem 11.4rem 4.6rem 1fr; height: 3.4rem; align-items: center; }
.thead { height: 4.8rem; background: #333738; border-bottom: .22rem solid #4d5152; color: #fff; }
.thead b { font-weight: 600; padding-left: .7rem; height: 3.4rem; line-height: 3.4rem; letter-spacing: -.01em; }
.thead i, .thead .lt, .thead .pr { height: 3.4rem; border-left: .22rem solid #4d5152; }
.tbody { height: 90.25rem; padding-top: .1rem; background: #232728; border-bottom: .22rem solid #4d4f50; }
.row .name { padding-left: 3.9rem; padding-top: .1rem; }
.thead .name { padding: 0 0 0 .8rem; }
.tbody .radio, .tbody .lbulb, .tbody .llock, .tbody .sw, .tbody .dia { margin: 0 auto; }
.tbody .radio:not(.on) { background: linear-gradient(#444647, #585a5a); }
.lbulb { width: 2.45rem; height: 2.8rem; }
.llock { width: 2.9rem; height: 2.9rem; }
.dim { opacity: .42; }
.sw { width: 2.8rem; height: 2.8rem; border: .22rem solid #000; }
.mat { width: 2.6rem; height: 2.6rem; border-radius: 50%; background: #fff; border: .15rem solid #000; margin-left: .5rem; }
.pick { display: flex; align-items: center; padding-left: 1.3rem; padding-top: .3rem; letter-spacing: -.01em; }
.pick span { width: 7.9rem; }
.pick.print span { width: 7.3rem; }
.pick .ud { margin-top: -.3rem; }
.dia { width: 3rem; height: 3rem; }
.foot { flex: 1; display: flex; padding: 1.4rem 0 0 3.8rem; gap: 3.6rem; background: #363a3b; }
.pm, .act { height: 3.2rem; border-radius: .6rem; background: #6a6c6c; border-top: .11rem solid #828484; box-shadow: 0 .1rem .2rem rgba(0,0,0,.4); }
.pm { width: 9.2rem; }
.pm svg { width: 9.2rem; height: 3.2rem; }
.act { width: 6.8rem; display: flex; align-items: center; justify-content: center; gap: 1.5rem; color: #fff; }
.act .g { width: 2rem; height: 2rem; color: #2e3030; }
.act .c { width: 1.3rem; height: .9rem; }

.status { flex: 1; border-top: .22rem solid #000; background: #323232; border-radius: 0 0 1rem 1rem; display: flex; align-items: center; padding-top: .2rem; }
.burger { width: 2.8rem; height: 2rem; margin-left: .9rem; }
.prompt { margin-left: .5rem; width: 302.7rem; }
.units { width: 14.7rem; }
.cplane { width: 14rem; height: 3.2rem; border: .22rem solid #707070; border-radius: .8rem; padding: 0 1rem 0 1.2rem; display: flex; align-items: center; justify-content: space-between; margin-right: 2.8rem; }
.cplane .ud { color: #d0d0d0; }
.cx { width: 16.4rem; } .cy { width: 16.9rem; }
```
FILE: app.js
```js
// Construction plane: project a 20 x 20 grid onto its four screen corners.
const quad = [[1684.7, 1302], [2925.5, 1444], [2705, 2102.7], [1101.8, 1853.2]];

function projector([p0, p1, p2, p3]) {
  const dx1 = p1[0] - p2[0], dx2 = p3[0] - p2[0], sx = p0[0] - p1[0] + p2[0] - p3[0];
  const dy1 = p1[1] - p2[1], dy2 = p3[1] - p2[1], sy = p0[1] - p1[1] + p2[1] - p3[1];
  const det = dx1 * dy2 - dx2 * dy1;
  const g = (sx * dy2 - dx2 * sy) / det, h = (dx1 * sy - sx * dy1) / det;
  return (u, v) => {
    const w = g * u + h * v + 1;
    const x = ((p1[0] - p0[0] + g * p1[0]) * u + (p3[0] - p0[0] + h * p3[0]) * v + p0[0]) / w;
    const y = ((p1[1] - p0[1] + g * p1[1]) * u + (p3[1] - p0[1] + h * p3[1]) * v + p0[1]) / w;
    return x.toFixed(2) + ' ' + y.toFixed(2);
  };
}

const at = projector(quad);
let major = '', minor = '';
for (let i = 0; i <= 200; i++) {
  const t = i / 200;
  const d = `M${at(t, 0)}L${at(t, 1)}M${at(0, t)}L${at(1, t)}`;
  if (i % 10) minor += d; else major += d;
}
document.getElementById('grid').innerHTML = `<path class="mnr" d="${minor}"/><path class="maj" d="${major}"/>`;

// Layer table
const layers = [['D...', '#000'], ['L...', '#c5341c'], ['L...', '#8a4bcf'], ['L...', '#1237f5'], ['L...', '#3a8a26'], ['L...', '#fff']];
const ud = '<svg class="ud"><use href="#updown"/></svg>';
document.getElementById('layers').innerHTML = layers.map(([name, color], i) => `
  <div class="row">
    <span class="name">${name}</span>
    <i class="radio${i ? '' : ' on'}"></i>
    <svg class="lbulb${i ? '' : ' dim'}"><use href="#bulb"/></svg>
    <svg class="llock${i ? '' : ' dim'}"><use href="#lock"/></svg>
    <i class="sw" style="background:${color}"></i>
    <i class="mat"></i>
    <span class="pick"><span>Conti...</span>${ud}</span>
    <svg class="dia" viewBox="0 0 30 30"><path d="M15 1.500 28.500 15 15 28.500 1.500 15z" fill="${color}" stroke="#000" stroke-width="2"/></svg>
    <span class="pick print"><span>Defa...</span>${ud}</span>
  </div>`).join('');
```
